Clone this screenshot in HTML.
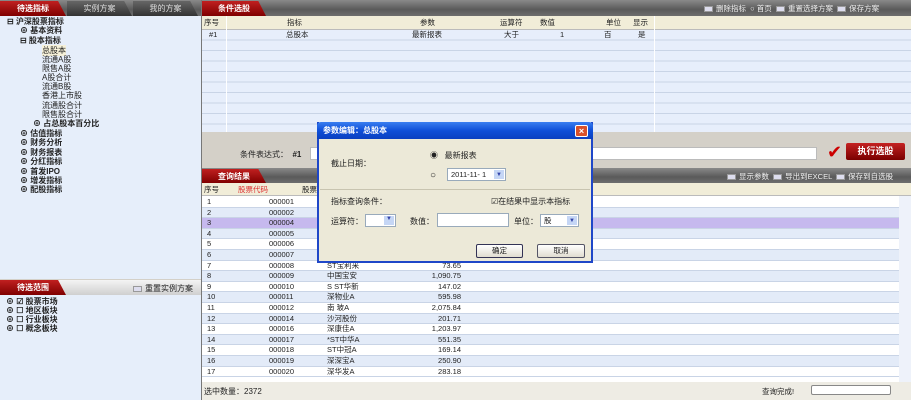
<!DOCTYPE html>
<html><head><meta charset="utf-8"><style>
*{margin:0;padding:0;box-sizing:border-box}
body{width:911px;height:400px;overflow:hidden;background:#d4d0c8;font-family:"Liberation Sans","Noto Sans CJK SC",sans-serif;font-size:8px;color:#222;position:relative}
.a{position:absolute}
.bar{background:linear-gradient(#8a8a8a,#5a5a5a 60%,#6e6e6e);}
.tab{background:linear-gradient(#c02020,#800000);color:#fff;font-weight:bold;text-align:center;line-height:15px;font-size:8px;clip-path:polygon(0 0,88% 0,100% 100%,0 100%)}
.gtab{background:linear-gradient(#666,#333);color:#ddd;text-align:center;line-height:15px;font-size:8px;clip-path:polygon(0 0,88% 0,100% 100%,0 100%)}
.tree div{position:absolute;white-space:nowrap;font-size:8px}
.b{font-weight:bold}
.row{position:absolute;left:202px;width:697px;height:10.6px;border-bottom:1px solid #c9d4e6;font-size:7.5px;line-height:10px}
.row span{position:absolute}
.ico{display:inline-block;width:9px;height:6px;background:#dde;border:1px solid #999;vertical-align:middle;margin-right:3px}
.hd span{position:absolute;top:0}
</style></head><body>
<!-- left panel -->
<div class="a" style="left:0;top:0;width:201px;height:279px;background:#e6eefa"></div>
<div class="a bar" style="left:0;top:0;width:201px;height:16px"></div>
<div class="a tab" style="left:0;top:1px;width:66px;height:15px">待选指标</div>
<div class="a gtab" style="left:67px;top:1px;width:65px;height:15px">实例方案</div>
<div class="a gtab" style="left:133px;top:1px;width:65px;height:15px">我的方案</div>
<div class="tree">
<div style="left:7px;top:16px" class="b">⊟ 沪深股票指标</div>
<div style="left:20px;top:25px" class="b">⊕ 基本资料</div>
<div style="left:20px;top:35px" class="b">⊟ 股本指标</div>
<div style="left:42px;top:45px;background:#f5f0d8">总股本</div>
<div style="left:42px;top:54px">流通A股</div>
<div style="left:42px;top:63px">限售A股</div>
<div style="left:42px;top:72px">A股合计</div>
<div style="left:42px;top:81px">流通B股</div>
<div style="left:42px;top:90px">香港上市股</div>
<div style="left:42px;top:100px">流通股合计</div>
<div style="left:42px;top:109px">限售股合计</div>
<div style="left:33px;top:118px" class="b">⊕ 占总股本百分比</div>
<div style="left:20px;top:128px" class="b">⊕ 估值指标</div>
<div style="left:20px;top:137px" class="b">⊕ 财务分析</div>
<div style="left:20px;top:147px" class="b">⊕ 财务报表</div>
<div style="left:20px;top:156px" class="b">⊕ 分红指标</div>
<div style="left:20px;top:166px" class="b">⊕ 首发IPO</div>
<div style="left:20px;top:175px" class="b">⊕ 增发指标</div>
<div style="left:20px;top:184px" class="b">⊕ 配股指标</div>
</div>
<div class="a" style="left:0;top:280px;width:201px;height:120px;background:#e6eefa"></div>
<div class="a" style="left:0;top:280px;width:201px;height:15px;background:linear-gradient(#f4f4f4,#cfcfcf)"></div>
<div class="a tab" style="left:0;top:280px;width:66px;height:15px">待选范围</div>
<div class="a" style="left:133px;top:283px;font-size:8px"><span class="ico"></span>重置实例方案</div>
<div class="tree">
<div style="left:6px;top:296px" class="b">⊕ ☑ 股票市场</div>
<div style="left:6px;top:305px" class="b">⊕ ☐ 地区板块</div>
<div style="left:6px;top:314px" class="b">⊕ ☐ 行业板块</div>
<div style="left:6px;top:323px" class="b">⊕ ☐ 概念板块</div>
</div>
<!-- right top -->
<div class="a bar" style="left:202px;top:0;width:709px;height:16px"></div>
<div class="a tab" style="left:202px;top:1px;width:64px;height:15px">条件选股</div>
<div class="a" style="left:704px;top:3px;color:#eee;font-size:7.5px;white-space:nowrap"><span class="ico"></span>删除指标 &nbsp;○ 首页 &nbsp;<span class="ico"></span>重置选择方案 &nbsp;<span class="ico"></span>保存方案</div>
<div class="a" style="left:202px;top:16px;width:709px;height:14px;background:#f1edd8;border-bottom:1px solid #bbb"></div>
<div class="a hd" style="left:202px;top:17px;width:709px;height:12px;line-height:11px;font-size:7.5px">
<span style="left:2px">序号</span><span style="left:85px">指标</span><span style="left:218px">参数</span><span style="left:298px">运算符</span><span style="left:338px">数值</span><span style="left:404px">单位</span><span style="left:431px">显示</span></div>
<div class="a" style="left:202px;top:30px;width:709px;height:102px;background:repeating-linear-gradient(#e7eefb 0,#e7eefb 9.5px,#c9d4e6 9.5px,#c9d4e6 10.5px)"></div>
<div class="a" style="left:202px;top:30px;width:709px;height:10px;line-height:10px;font-size:7.5px">
<span class="a" style="left:7px">#1</span><span class="a" style="left:84px">总股本</span><span class="a" style="left:210px">最新报表</span><span class="a" style="left:302px">大于</span><span class="a" style="left:358px">1</span><span class="a" style="left:402px">百</span><span class="a" style="left:436px">是</span></div>
<div class="a" style="left:226px;top:16px;width:1px;height:116px;background:#fff"></div>
<div class="a" style="left:654px;top:16px;width:1px;height:116px;background:#fff"></div>
<div class="a" style="left:240px;top:149px;font-size:8px">条件表达式：&nbsp; <b>#1</b></div>
<div class="a" style="left:310px;top:147px;width:507px;height:13px;background:#fff;border:1px solid #bbb"></div>
<div class="a" style="left:827px;top:143px;font-size:18px;color:#c00;line-height:18px">✔</div>
<div class="a" style="left:846px;top:143px;width:59px;height:17px;background:linear-gradient(#c42222,#7a0000);color:#fff;font-weight:bold;font-size:9px;text-align:center;line-height:17px;border-radius:2px">执行选股</div>
<!-- result -->
<div class="a bar" style="left:202px;top:168px;width:709px;height:15px"></div>
<div class="a tab" style="left:202px;top:169px;width:64px;height:14px">查询结果</div>
<div class="a" style="left:727px;top:171px;color:#eee;font-size:7.5px;white-space:nowrap"><span class="ico"></span>显示参数 &nbsp;<span class="ico"></span>导出到EXCEL &nbsp;<span class="ico"></span>保存到自选股</div>
<div class="a" style="left:202px;top:183px;width:709px;height:13px;background:#f1edd8;border-bottom:1px solid #bbb"></div>
<div class="a hd" style="left:202px;top:184px;width:709px;height:12px;line-height:11px;font-size:7.5px"><span style="left:2px">序号</span><span style="left:36px;color:#d33">股票代码</span><span style="left:100px">股票</span></div>
<div class="a" style="left:202px;top:196px;width:697px;height:186px;background:#fff"></div>
<div id="rows"></div>
<div class="a" style="left:899px;top:196px;width:12px;height:186px;background:#eef2fa"></div>
<div class="a" style="left:202px;top:382px;width:709px;height:18px;background:#eeece4"></div>
<div class="a" style="left:204px;top:386px;font-size:8px">选中数量：2372</div>
<div class="a" style="left:762px;top:386px;font-size:7.5px">查询完成!</div>
<div class="a" style="left:811px;top:385px;width:80px;height:10px;background:#fff;border:1px solid #888;border-radius:2px"></div>
<div class="a" style="left:201px;top:0;width:1px;height:400px;background:#777"></div>
<!-- dialog -->
<div class="a" style="left:317px;top:122px;width:276px;height:141px;background:#ece9d8;border:2px solid #1f47c8;border-top:0"></div>
<div class="a" style="left:317px;top:122px;width:276px;height:17px;background:linear-gradient(#3a7ef0,#0f4fd8 50%,#0a3fc0);color:#fff;font-weight:bold;font-size:8px;line-height:17px;padding-left:6px;border-radius:4px 4px 0 0">参数编辑：总股本</div>
<div class="a" style="left:575px;top:125px;width:13px;height:12px;background:#d8502a;border:1px solid #fff;border-radius:2px;color:#fff;font-size:9px;line-height:10px;text-align:center;font-weight:bold">×</div>
<div class="a" style="left:331px;top:158px;font-size:8px">截止日期：</div>
<div class="a" style="left:430px;top:150px;font-size:8px">◉ &nbsp; 最新报表</div>
<div class="a" style="left:430px;top:170px;font-size:10px">○</div>
<div class="a" style="left:447px;top:168px;width:59px;height:13px;background:#fff;border:1px solid #9ab;font-size:7.5px;line-height:11px;padding-left:3px">2011-11- 1<span style="position:absolute;right:1px;top:1px;width:10px;height:9px;background:#c5d6f5;color:#34a;font-size:6px;text-align:center">▼</span></div>
<div class="a" style="left:320px;top:189px;width:270px;height:1px;background:#c8c4b0"></div>
<div class="a" style="left:331px;top:196px;font-size:8px">指标查询条件：</div>
<div class="a" style="left:491px;top:196px;font-size:8px">☑在结果中显示本指标</div>
<div class="a" style="left:331px;top:216px;font-size:8px">运算符：</div>
<div class="a" style="left:365px;top:214px;width:31px;height:13px;background:#fff;border:1px solid #9ab"><span style="position:absolute;right:1px;top:1px;width:10px;height:9px;background:#c5d6f5;color:#34a;font-size:6px;text-align:center">▼</span></div>
<div class="a" style="left:410px;top:216px;font-size:8px">数值：</div>
<div class="a" style="left:437px;top:213px;width:72px;height:14px;background:#fff;border:1px solid #9ab"></div>
<div class="a" style="left:514px;top:216px;font-size:8px">单位：</div>
<div class="a" style="left:540px;top:214px;width:39px;height:13px;background:#fff;border:1px solid #9ab;font-size:7.5px;line-height:11px;padding-left:3px">股<span style="position:absolute;right:1px;top:1px;width:10px;height:9px;background:#c5d6f5;color:#34a;font-size:6px;text-align:center">▼</span></div>
<div class="a" style="left:476px;top:244px;width:47px;height:14px;background:linear-gradient(#fff,#e0ddd0);border:1px solid #335;border-radius:2px;font-size:7.5px;text-align:center;line-height:12px">确定</div>
<div class="a" style="left:537px;top:244px;width:48px;height:14px;background:linear-gradient(#fff,#e0ddd0);border:1px solid #556;border-radius:2px;font-size:7.5px;text-align:center;line-height:12px">取消</div>
<script>
var d=[["1","000001"],["2","000002"],["3","000004"],["4","000005"],["5","000006"],["6","000007"],["7","000008","ST宝利来","73.65"],["8","000009","中国宝安","1,090.75"],["9","000010","S ST华新","147.02"],["10","000011","深物业A","595.98"],["11","000012","南  玻A","2,075.84"],["12","000014","沙河股份","201.71"],["13","000016","深康佳A","1,203.97"],["14","000017","*ST中华A","551.35"],["15","000018","ST中冠A","169.14"],["16","000019","深深宝A","250.90"],["17","000020","深华发A","283.18"]];
var h="";for(var i=0;i<d.length;i++){var r=d[i];var bg=i==2?"#c6b9ee":(i%2?"#e3ebf8":"#fff");
h+='<div class="row" style="top:'+(197+i*10.6)+'px;background:'+bg+'"><span style="left:5px">'+r[0]+'</span><span style="left:67px">'+r[1]+'</span>'+(r[2]?'<span style="left:125px">'+r[2]+'</span><span style="right:438px">'+r[3]+'</span>':'')+'</div>';}
document.getElementById("rows").innerHTML=h;
</script>
</body></html>
